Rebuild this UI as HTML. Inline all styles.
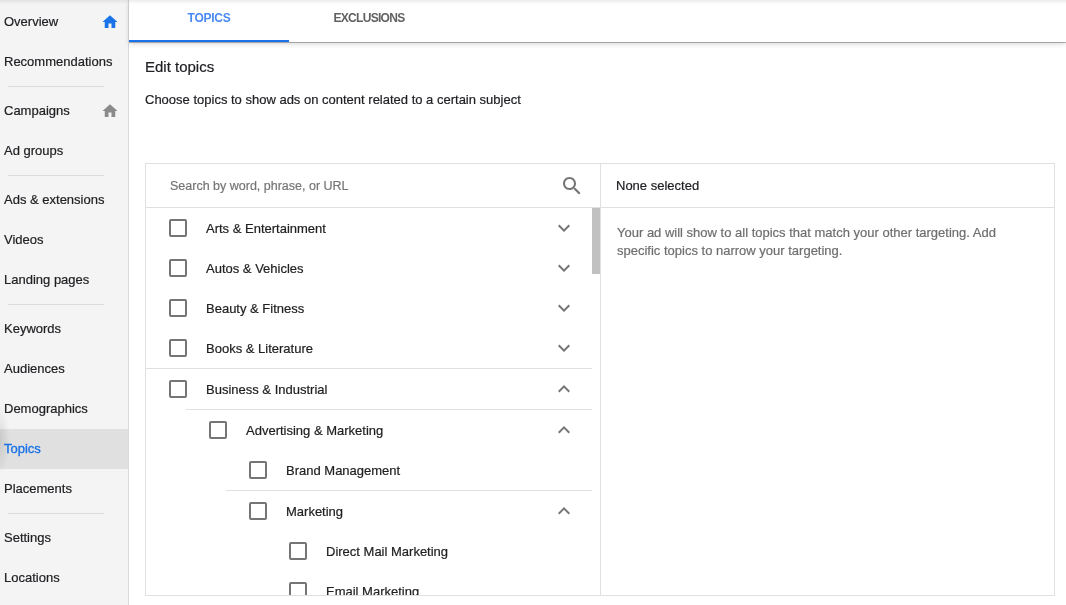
<!DOCTYPE html>
<html><head><meta charset="utf-8">
<style>
*{margin:0;padding:0;box-sizing:border-box}
html,body{width:1066px;height:605px;overflow:hidden;background:#fff;-webkit-font-smoothing:antialiased;-webkit-text-stroke-width:0.2px;font-family:"Liberation Sans",sans-serif;color:#212121}
.abs{position:absolute}
#side{position:absolute;left:0;top:0;width:129px;height:605px;background:#f4f4f4;border-right:1px solid #d9d9d9}
.si{position:absolute;left:0;width:128px;height:40px;font-size:13px;line-height:13px;color:#202124;white-space:nowrap}
.si span{position:absolute;left:4px;top:13px}
.si.sel{background:#e0e0e0}
.si.sel span{color:#1a73e8;-webkit-text-stroke:0.35px #1a73e8}
.sdiv{position:absolute;left:8px;width:96px;height:1px;background:#dadce0}
.hi{position:absolute;left:101px;width:18px;height:18px}
#topshadow{position:absolute;left:0;top:0;width:1066px;height:5px;background:linear-gradient(rgba(0,0,0,.07),rgba(0,0,0,.02) 60%,rgba(0,0,0,0));z-index:10}
#tabs{position:absolute;left:129px;top:0;width:937px;height:42px;background:#fff;box-shadow:0 1px 0 rgba(0,0,0,.28),0 2px 5px rgba(0,0,0,.16)}
.tab{position:absolute;top:0;width:160px;height:42px;font-size:12px;line-height:12px;text-align:center;font-weight:bold;-webkit-text-stroke-width:0}
.tab span{position:absolute;left:0;right:0;top:12px}
.t1{left:0;color:#4a8af4}
.t2{left:160px;color:#616161}
.ul{position:absolute;left:0;top:40px;width:160px;height:2px;background:#1a73e8}
#h1{position:absolute;left:145px;top:59px;font-size:15px;line-height:15px;color:#202124}
#desc{position:absolute;left:145px;top:93px;font-size:13px;line-height:13px;color:#202124}
#panel{position:absolute;left:145px;top:163px;width:910px;height:433px;border:1px solid #e0e0e0}
#search{position:absolute;left:24px;top:16px;font-size:12.5px;line-height:13px;color:#757575}
#sdiv{position:absolute;left:0;top:43px;width:454px;height:1px;background:#e0e0e0}
#vdiv{position:absolute;left:454px;top:0;width:1px;height:431px;background:#e0e0e0}
#rdiv{position:absolute;left:455px;top:43px;width:453px;height:1px;background:#e0e0e0}
#list{position:absolute;left:0;top:44px;width:454px;height:387px;overflow:hidden}
#sb{position:absolute;left:446px;top:0;width:8px;height:66px;background:#c1c1c1}
.row{position:absolute;height:40px;font-size:13px;line-height:13px;color:#212121;white-space:nowrap}
.cb{position:absolute;width:18px;height:18px;border:2px solid #757575;border-radius:2px}
.lbl{position:absolute}
.chev{position:absolute;left:405.5px;width:24px;height:24px}
.ldiv{position:absolute;height:1px;background:#e0e0e0}
#none{position:absolute;left:470px;top:15px;font-size:13px;line-height:13px;color:#202124}
#info{position:absolute;left:471px;top:60px;width:420px;font-size:13px;line-height:18px;color:#6e6e6e}
</style></head><body><div id="root" style="position:absolute;left:0;top:0;width:1066px;height:605px;will-change:transform">
<div id="topshadow"></div>
<div id="side">
  <div class="si" style="top:2px"><span>Overview</span></div>
  <svg class="hi" style="top:13px" viewBox="0 0 24 24"><path fill="#1a73e8" d="M10 20v-6h4v6h5v-8h3L12 3 2 12h3v8z"/></svg>
  <div class="si" style="top:42px"><span>Recommendations</span></div>
  <div class="sdiv" style="top:86px"></div>
  <div class="si" style="top:91px"><span>Campaigns</span></div>
  <svg class="hi" style="top:102px" viewBox="0 0 24 24"><path fill="#8a8a8a" d="M10 20v-6h4v6h5v-8h3L12 3 2 12h3v8z"/></svg>
  <div class="si" style="top:131px"><span>Ad groups</span></div>
  <div class="sdiv" style="top:175px"></div>
  <div class="si" style="top:180px"><span>Ads &amp; extensions</span></div>
  <div class="si" style="top:220px"><span>Videos</span></div>
  <div class="si" style="top:260px"><span>Landing pages</span></div>
  <div class="sdiv" style="top:304px"></div>
  <div class="si" style="top:309px"><span>Keywords</span></div>
  <div class="si" style="top:349px"><span>Audiences</span></div>
  <div class="si" style="top:389px"><span>Demographics</span></div>
  <div class="si sel" style="top:429px"><span>Topics</span></div>
  <div class="si" style="top:469px"><span>Placements</span></div>
  <div class="sdiv" style="top:513px"></div>
  <div class="si" style="top:518px"><span>Settings</span></div>
  <div class="si" style="top:558px"><span>Locations</span></div>
  <div style="position:absolute;left:-10px;top:405px;width:20px;height:70px;background:radial-gradient(ellipse at center,rgba(0,0,0,.10),rgba(0,0,0,0) 70%)"></div>
</div>
<div id="tabs">
  <div class="tab t1"><span style="letter-spacing:-0.25px">TOPICS</span></div>
  <div class="tab t2"><span style="letter-spacing:-0.7px">EXCLUSIONS</span></div>
  <div class="ul"></div>
</div>
<div id="h1">Edit topics</div>
<div id="desc">Choose topics to show ads on content related to a certain subject</div>
<div id="panel">
  <div id="search">Search by word, phrase, or URL</div>
  <svg class="abs" style="left:413.5px;top:10px;width:24px;height:24px" viewBox="0 0 24 24"><path fill="#757575" d="M15.5 14h-.79l-.28-.27C15.41 12.590 16 11.11 16 9.5 16 5.910 13.090 3 9.5 3S3 5.910 3 9.5 5.910 16 9.5 16c1.61 0 3.090-.59 4.230-1.570l.27.28v.79l5 4.990L20.490 19l-4.990-5zm-6 0C7.010 14 5 11.990 5 9.5S7.010 5 9.5 5 14 7.010 14 9.5 11.990 14 9.5 14z"/></svg>
  <div id="sdiv"></div>
  <div id="vdiv"></div>
  <div id="rdiv"></div>
  <div id="list">
    <div id="sb"></div>
    <div class="cb" style="left:23px;top:11px"></div>
    <div class="row lbl" style="left:60px;top:14px">Arts &amp; Entertainment</div>
    <svg class="chev" style="top:8px" viewBox="0 0 24 24"><path fill="#757575" d="M16.59 8.59L12 13.17 7.41 8.59 6 10l6 6 6-6z"/></svg>
    <div class="cb" style="left:23px;top:51px"></div>
    <div class="row lbl" style="left:60px;top:54px">Autos &amp; Vehicles</div>
    <svg class="chev" style="top:48px" viewBox="0 0 24 24"><path fill="#757575" d="M16.59 8.59L12 13.17 7.41 8.59 6 10l6 6 6-6z"/></svg>
    <div class="cb" style="left:23px;top:91px"></div>
    <div class="row lbl" style="left:60px;top:94px">Beauty &amp; Fitness</div>
    <svg class="chev" style="top:88px" viewBox="0 0 24 24"><path fill="#757575" d="M16.59 8.59L12 13.17 7.41 8.59 6 10l6 6 6-6z"/></svg>
    <div class="cb" style="left:23px;top:131px"></div>
    <div class="row lbl" style="left:60px;top:134px">Books &amp; Literature</div>
    <svg class="chev" style="top:128px" viewBox="0 0 24 24"><path fill="#757575" d="M16.59 8.59L12 13.17 7.41 8.59 6 10l6 6 6-6z"/></svg>
    <div class="cb" style="left:23px;top:172px"></div>
    <div class="row lbl" style="left:60px;top:175px">Business &amp; Industrial</div>
    <svg class="chev" style="top:169px" viewBox="0 0 24 24"><path fill="#757575" d="M12 8l-6 6 1.41 1.41L12 10.83l4.59 4.58L18 14z"/></svg>
    <div class="cb" style="left:63px;top:213px"></div>
    <div class="row lbl" style="left:100px;top:216px">Advertising &amp; Marketing</div>
    <svg class="chev" style="top:210px" viewBox="0 0 24 24"><path fill="#757575" d="M12 8l-6 6 1.41 1.41L12 10.83l4.59 4.58L18 14z"/></svg>
    <div class="cb" style="left:103px;top:253px"></div>
    <div class="row lbl" style="left:140px;top:256px">Brand Management</div>
    <div class="cb" style="left:103px;top:294px"></div>
    <div class="row lbl" style="left:140px;top:297px">Marketing</div>
    <svg class="chev" style="top:291px" viewBox="0 0 24 24"><path fill="#757575" d="M12 8l-6 6 1.41 1.41L12 10.83l4.59 4.58L18 14z"/></svg>
    <div class="cb" style="left:143px;top:334px"></div>
    <div class="row lbl" style="left:180px;top:337px">Direct Mail Marketing</div>
    <div class="cb" style="left:143px;top:374px"></div>
    <div class="row lbl" style="left:180px;top:377px">Email Marketing</div>
    <div class="ldiv" style="left:0;top:160px;width:446px"></div>
    <div class="ldiv" style="left:40px;top:201px;width:406px"></div>
    <div class="ldiv" style="left:80px;top:282px;width:366px"></div>
  </div>
  <div id="none">None selected</div>
  <div id="info">Your ad will show to all topics that match your other targeting. Add specific topics to narrow your targeting.</div>
</div>
</div></body></html>
